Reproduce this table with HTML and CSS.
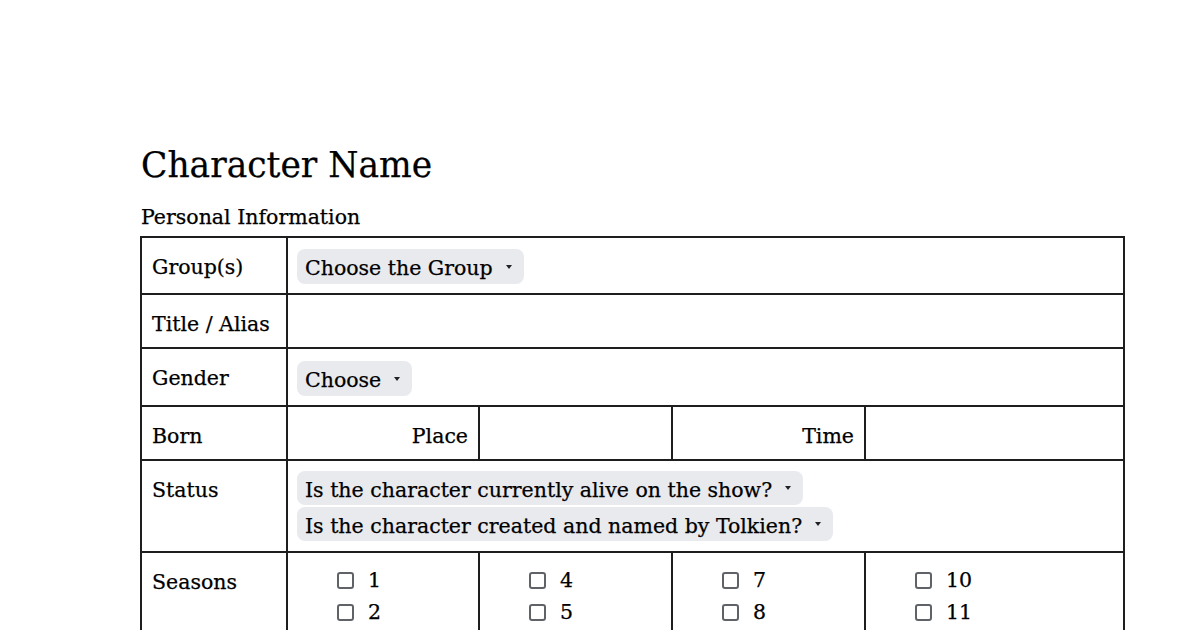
FILE: index.html
```html
<!DOCTYPE html>
<html lang="en">
<head>
<meta charset="utf-8">
<title>Character Name</title>
<link rel="stylesheet" href="styles.css">
</head>
<body>
<main class="page">
  <h1 class="title">Character Name</h1>
  <p class="subtitle">Personal Information</p>
  <table class="info">
    <colgroup>
      <col class="c-label">
      <col class="c-a">
      <col class="c-b">
      <col class="c-c">
      <col class="c-d">
    </colgroup>
    <tr>
      <td class="label">Group(s)</td>
      <td class="chip-cell" colspan="4"><span class="chip">Choose the Group<span class="caret"></span></span></td>
    </tr>
    <tr>
      <td class="label">Title / Alias</td>
      <td colspan="4"></td>
    </tr>
    <tr>
      <td class="label">Gender</td>
      <td class="chip-cell gender" colspan="4"><span class="chip">Choose<span class="caret"></span></span></td>
    </tr>
    <tr>
      <td class="label">Born</td>
      <td class="label right">Place</td>
      <td></td>
      <td class="label right">Time</td>
      <td></td>
    </tr>
    <tr>
      <td class="label">Status</td>
      <td class="chip-cell status" colspan="4">
        <div class="chips">
          <span class="chip">Is the character currently alive on the show?<span class="caret"></span></span>
          <span class="chip">Is the character created and named by Tolkien?<span class="caret"></span></span>
        </div>
      </td>
    </tr>
    <tr>
      <td class="label">Seasons</td>
      <td><ul class="checks"><li><span class="box"></span>1</li><li><span class="box"></span>2</li></ul></td>
      <td><ul class="checks"><li><span class="box"></span>4</li><li><span class="box"></span>5</li></ul></td>
      <td><ul class="checks"><li><span class="box"></span>7</li><li><span class="box"></span>8</li></ul></td>
      <td><ul class="checks"><li><span class="box"></span>10</li><li><span class="box"></span>11</li></ul></td>
    </tr>
  </table>
</main>
</body>
</html>
```

FILE: styles.css
```css
html, body {
  margin: 0;
  padding: 0;
  background: #ffffff;
}

body {
  font-family: "DejaVu Serif", serif;
  color: #000000;
  overflow: hidden;
  -webkit-text-stroke: 0.25px currentColor;
}

.page {
  padding: 145px 0 0 140px;
}

.title {
  margin: 0 0 0 1px;
  font-size: 34.5px;
  line-height: 40px;
  font-weight: normal;
}

.subtitle {
  margin: 20px 0 7px 1px;
  font-size: 20.5px;
  line-height: 24px;
}

.info {
  border-collapse: collapse;
  table-layout: fixed;
  width: 983px;
  font-size: 20.5px;
}

.c-label { width: 146px; }
.c-a { width: 192px; }
.c-b { width: 193px; }
.c-c { width: 193px; }
.c-d { width: 259px; }

.info td {
  border: 2px solid #1e1e1e;
  padding: 13px 10px 6px;
  vertical-align: top;
  line-height: 33px;
  height: 33px;
}

.info td.right {
  text-align: right;
}

.info td.chip-cell {
  padding: 11px 9px 9px;
  height: 35px;
}

.info td.gender {
  padding-top: 12px;
}

.info td.status {
  padding: 10px 9px 10px;
}

.chip {
  display: inline-flex;
  align-items: center;
  vertical-align: top;
  box-sizing: border-box;
  height: 35px;
  padding: 3px 12px 0 8px;
  line-height: 32px;
  background: #e9eaee;
  border-radius: 8px;
  white-space: nowrap;
}

.caret {
  display: inline-block;
  width: 0;
  height: 0;
  margin-left: 13px;
  margin-top: -3px;
  border-left: 3.5px solid transparent;
  border-right: 3.5px solid transparent;
  border-top: 4px solid #202124;
}

.chips {
  display: flex;
  flex-direction: column;
  align-items: flex-start;
  gap: 2px;
}

.chips .chip {
  height: 34px;
}

.checks {
  list-style: none;
  margin: -2px 0 0;
  padding: 0 0 0 39px;
}

.checks li {
  display: flex;
  align-items: center;
  gap: 14px;
  height: 32px;
  line-height: 32px;
}

.box {
  box-sizing: border-box;
  width: 17px;
  height: 17px;
  border: 2px solid #5f6368;
  border-radius: 3px;
  flex: none;
}
```
